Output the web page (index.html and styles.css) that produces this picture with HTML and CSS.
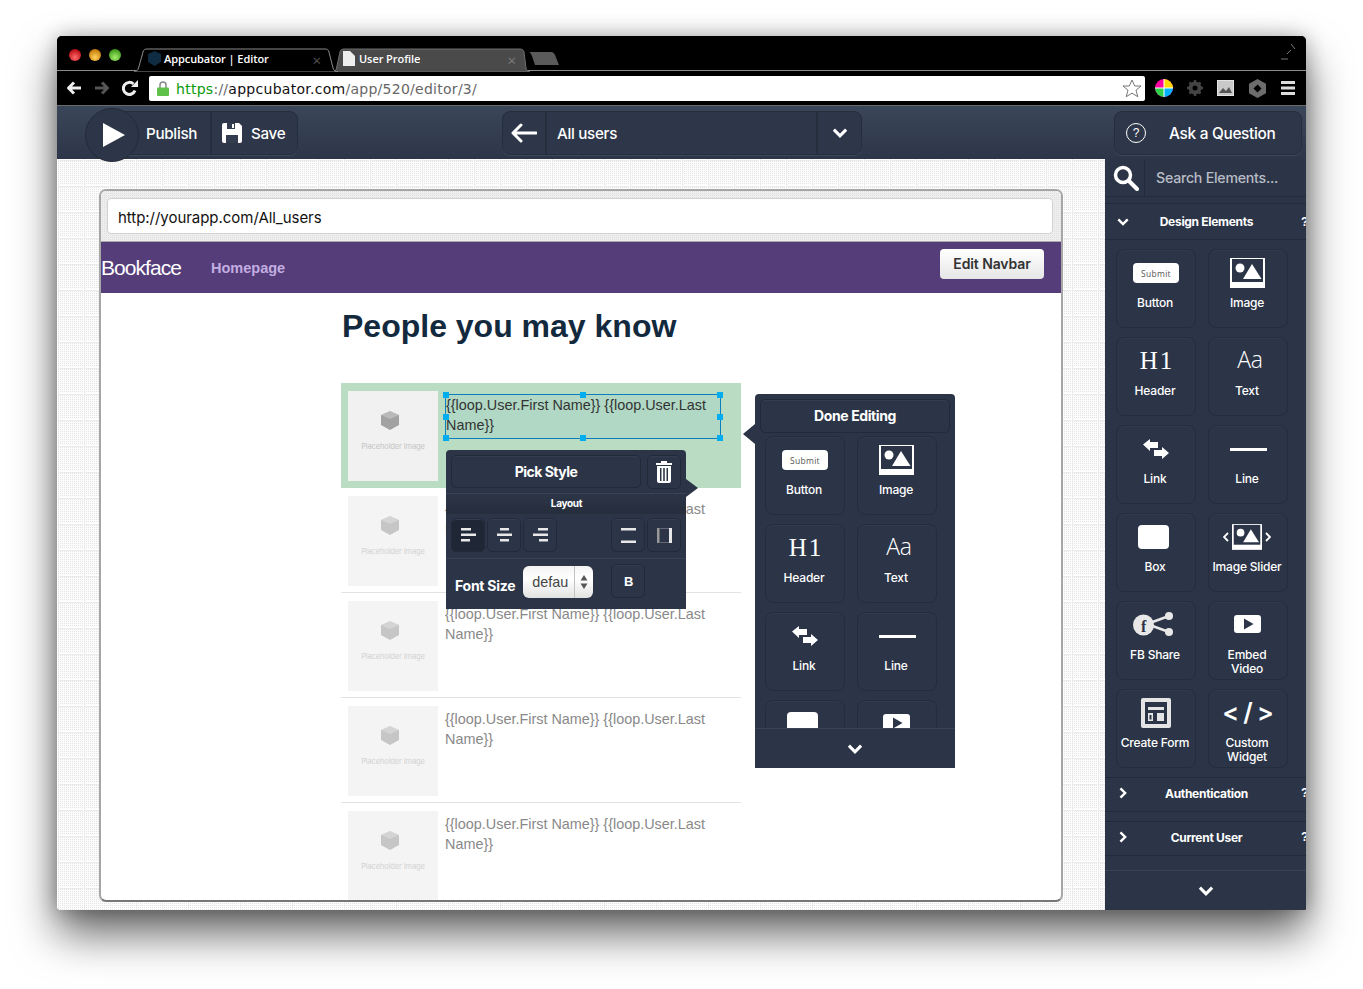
FILE: index.html
```html
<!DOCTYPE html>
<html lang="en">
<head>
<meta charset="utf-8">
<title>Appcubator | Editor</title>
<link rel="stylesheet" href="styles.css">
</head>
<body>
<svg class="defs" width="0" height="0" aria-hidden="true">
  <symbol id="i-image" viewBox="0 0 35 30"><path fill="#fff" d="M0 0h35v30H0z"/><path fill="#2c3547" d="M2 1h31v23H2z"/><circle cx="10" cy="10" r="4.5" fill="#fff"/><path fill="#fff" d="M13 21l9-15 9.500 15z"/></symbol>
  <symbol id="i-link" viewBox="0 0 26 20"><path fill="#fff" d="M0 5.500L7 0v3h8v6H7v3z"/><path fill="#fff" d="M26 14l-7-6v3h-8v6h8v3z"/></symbol>
  <symbol id="i-share" viewBox="0 0 40 26"><path stroke="#e8e8e8" stroke-width="2.500" fill="none" d="M14 13L36 5M14 13l22 8"/><circle cx="36" cy="5" r="4" fill="#e8e8e8"/><circle cx="36" cy="21" r="4" fill="#e8e8e8"/><circle cx="10.500" cy="14" r="10.500" fill="#e8e8e8"/><text x="10.500" y="21" text-anchor="middle" class="fb-f">f</text></symbol>
  <symbol id="i-video" viewBox="0 0 27 18"><rect width="27" height="18" rx="3" fill="#fff"/><path fill="#2c3547" d="M10 3.500L19.500 9 10 14.500z"/></symbol>
  <symbol id="i-form" viewBox="0 0 30 30"><rect width="30" height="30" rx="2" fill="#e4e4e4"/><path fill="#2c3547" d="M4 4h22v22H4z"/><path fill="#e4e4e4" d="M7 9h16v3H7zM7 15h5v8H7zM16 15h7v8h-7z"/><path fill="#2c3547" d="M8.500 17h2v4.500h-2z"/></symbol>
  <symbol id="i-cube" viewBox="0 0 18 19"><path fill="currentColor" d="M9 0l9 4v10l-9 5-9-5V4z"/><path fill="#fff" opacity=".25" d="M9 0l9 4-9 4-9-4z"/></symbol>
</svg>

<div class="window">
  <div class="tabstrip">
    <div class="lights"><i class="light red"></i><i class="light amber"></i><i class="light green"></i></div>
    <div class="tab tab-active">
      <svg class="tab-shape" width="204" height="24" viewBox="0 0 204 24"><path d="M-1 23H1c2 0 3-1 3.500-3L9 4c.5-2 1.500-3 4-3h178c2.500 0 3.500 1 4 3l4 16c.5 2 2 4 5 4H-1z" fill="#000" stroke="#8b8b8b"/></svg>
      <svg class="favicon" width="15" height="15" viewBox="0 0 15 15"><path fill="#0f2c42" d="M7.500 0L14 3v8l-6.500 4L1 11V3z"/></svg>
      <span class="tab-title">Appcubator | Editor</span>
      <span class="tab-x">×</span>
    </div>
    <div class="tab tab-back">
      <svg class="tab-shape" width="202" height="24" viewBox="0 0 202 24"><path d="M2 24c3 0 4-2 4.500-4L10 4c.5-2 1.500-3 4-3h176c2.500 0 3.500 1 4 3l2 16c.5 2 2 4 4 4z" fill="#4a4a4a" stroke="#6f6f6f"/></svg>
      <svg class="favicon" width="12" height="15" viewBox="0 0 12 15"><path fill="#eee" d="M0 0h7l5 5v10H0z"/></svg>
      <span class="tab-title">User Profile</span>
      <span class="tab-x">×</span>
    </div>
    <svg class="newtab" width="32" height="15" viewBox="0 0 32 15"><path fill="#5a5a5a" d="M0 1h22c2 0 3 1 4 3l4 10H6L3 5C2 3 1 1 0 1z"/></svg>
    <svg class="fullscreen" width="16" height="18" viewBox="0 0 16 18"><path d="M0 16h7M6 11l4-4M10 1l4 5" stroke="#777" fill="none"/></svg>
  </div>

  <div class="omnibar">
    <svg class="nav-ico" width="16" height="14" viewBox="0 0 16 14"><path fill="none" stroke="#eee" stroke-width="3" stroke-linejoin="round" d="M15 7H3M8 1.500L2.500 7 8 12.500"/></svg>
    <svg class="nav-ico" width="16" height="14" viewBox="0 0 16 14"><path fill="none" stroke="#555" stroke-width="3" stroke-linejoin="round" d="M1 7h12M8 1.500L13.500 7 8 12.500"/></svg>
    <svg class="nav-ico" width="16" height="16" viewBox="0 0 16 16"><path fill="none" stroke="#eee" stroke-width="3" d="M13 10.500A6 6 0 1 1 11.500 4"/><path fill="#eee" d="M9 7h7V0z"/></svg>
    <div class="urlbar">
      <svg class="lock" width="12" height="15" viewBox="0 0 12 15"><path fill="none" stroke="#888" stroke-width="1.500" d="M3 7V4a3 3 0 0 1 6 0v3"/><rect y="6.500" width="12" height="8.500" rx="1" fill="#5fc04a"/></svg>
      <span class="url"><span class="u-https">https</span><span class="u-dim">://</span>appcubator.com<span class="u-dim">/app/520/editor/3/</span></span>
      <svg class="star" width="20" height="19" viewBox="0 0 20 19"><path fill="#fff" stroke="#777" d="M10 1l2.700 6h6.300l-5 4.200 1.800 6.500L10 14.200 4.200 17.700 6 11.200 1 7h6.300z"/></svg>
    </div>
    <div class="exts">
      <svg width="18" height="18" viewBox="0 0 18 18"><circle cx="9" cy="9" r="9" fill="#ff00a0"/><path fill="#ffd800" d="M9 9V0a9 9 0 0 1 9 9z"/><path fill="#00b0ff" d="M9 9h9a9 9 0 0 1-9 9z"/><path fill="#2fd04a" d="M9 9v9a9 9 0 0 1-9-9z"/><path stroke="#fff" d="M9 0v18M0 9h18"/></svg>
      <svg width="16" height="16" viewBox="0 0 16 16"><circle cx="8" cy="8" r="4.500" fill="none" stroke="#444" stroke-width="4"/><path stroke="#444" stroke-width="2.500" d="M8 0v16M0 8h16M2.500 2.500l11 11M13.500 2.500l-11 11"/><circle cx="8" cy="8" r="2.500" fill="#000"/></svg>
      <svg width="17" height="16" viewBox="0 0 17 16"><rect width="17" height="16" fill="#c9c9c9"/><path fill="#555" d="M2 13l4-5 3 3 3-4 3 6z"/><path fill="none" stroke="#fff" stroke-dasharray="1 1" d="M.5.500h16v15H.5z"/></svg>
      <svg width="17" height="19" viewBox="0 0 17 19"><path fill="#6d6d6d" d="M8.500 0L17 4.800v9.400L8.500 19 0 14.200V4.800z"/><path fill="#000" d="M8.500 5.500l4 4-4 4-4-4z"/></svg>
      <svg width="14" height="14" viewBox="0 0 14 14"><path fill="#ddd" d="M0 0h14v3H0zM0 5.500h14v3H0zM0 11h14v3H0z"/></svg>
    </div>
  </div>

  <div class="appbar">
    <div class="play-circle"><svg width="22" height="24" viewBox="0 0 22 24"><path fill="#fff" d="M0 0l22 12L0 24z"/></svg></div>
    <div class="bar-group publish-group">
      <span class="bar-cell publish-cell">Publish</span>
      <span class="bar-cell save-cell">
        <svg width="20" height="20" viewBox="0 0 20 20"><path fill="#fff" d="M2 0h15l3 3v15a2 2 0 0 1-2 2H2a2 2 0 0 1-2-2V2a2 2 0 0 1 2-2z"/><path fill="#333d4f" d="M5 0h8v6H5zM4 12h12v8H4z"/><path fill="#fff" d="M10 1h2v4h-2z"/></svg>
        Save
      </span>
    </div>
    <div class="bar-group page-group">
      <span class="bar-cell back-cell"><svg width="26" height="20" viewBox="0 0 26 20"><path fill="none" stroke="#fff" stroke-width="3" stroke-linecap="round" stroke-linejoin="round" d="M25 10H3M10 2l-8 8 8 8"/></svg></span>
      <span class="bar-cell page-cell">All users</span>
      <span class="bar-cell down-cell"><svg class="chev" width="16" height="10" viewBox="0 0 14 9"><path d="M1.500 1.500L7 7l5.500-5.500"/></svg></span>
    </div>
    <div class="bar-group help-group">
      <span class="help-ico">?</span>
      <span class="help-text">Ask a Question</span>
    </div>
  </div>

  <div class="workspace">
    <div class="canvas">
      <div class="frame">
        <div class="frame-top"><div class="address">http://yourapp.com/All_users</div></div>
        <div class="navbar">
          <span class="brand">Bookface</span>
          <span class="nav-link">Homepage</span>
          <span class="edit-navbar">Edit Navbar</span>
        </div>
        <div class="page">
          <h1 class="title">People you may know</h1>
          <div class="list">
            <div class="row row-selected">
              <div class="ph ph-strong"><svg class="cube" width="18" height="19"><use href="#i-cube"/></svg><span>Placeholder Image</span></div>
              <div class="name name-selected">{{loop.User.First Name}} {{loop.User.Last Name}}
                <i class="h h-tl"></i><i class="h h-tc"></i><i class="h h-tr"></i><i class="h h-ml"></i><i class="h h-mr"></i><i class="h h-bl"></i><i class="h h-bc"></i><i class="h h-br"></i>
              </div>
            </div>
            <div class="row">
              <div class="ph"><svg class="cube" width="18" height="19"><use href="#i-cube"/></svg><span>Placeholder Image</span></div>
              <div class="name">{{loop.User.First Name}} {{loop.User.Last Name}}</div>
            </div>
            <div class="row">
              <div class="ph"><svg class="cube" width="18" height="19"><use href="#i-cube"/></svg><span>Placeholder Image</span></div>
              <div class="name">{{loop.User.First Name}} {{loop.User.Last Name}}</div>
            </div>
            <div class="row">
              <div class="ph"><svg class="cube" width="18" height="19"><use href="#i-cube"/></svg><span>Placeholder Image</span></div>
              <div class="name">{{loop.User.First Name}} {{loop.User.Last Name}}</div>
            </div>
            <div class="row">
              <div class="ph"><svg class="cube" width="18" height="19"><use href="#i-cube"/></svg><span>Placeholder Image</span></div>
              <div class="name">{{loop.User.First Name}} {{loop.User.Last Name}}</div>
            </div>
          </div>
        </div>
      </div>

      <div class="style-pop">
        <div class="pop-head">
          <span class="btn pick-style">Pick Style</span>
          <span class="btn icon-btn"><svg width="16" height="22" viewBox="0 0 16 22"><path fill="#fff" d="M5 0h6v2h5v2H0V2h5zM1 5h14v15a2 2 0 0 1-2 2H3a2 2 0 0 1-2-2zm3 2v13h1.500V7zm3.200 0v13h1.600V7zm3.300 0v13H12V7z" fill-rule="evenodd"/></svg></span>
        </div>
        <div class="layout-band">Layout</div>
        <div class="layout-row">
          <span class="btn icon-btn active"><svg width="15" height="14" viewBox="0 0 15 14"><path fill="#e8e8e8" d="M0 0h10v2.500H0zM0 5.500h15V8H0zM0 11h9v2.500H0z"/></svg></span>
          <span class="btn icon-btn"><svg width="15" height="14" viewBox="0 0 15 14"><path fill="#e8e8e8" d="M3 0h9v2.500H3zM0 5.500h15V8H0zM3 11h9v2.500H3z"/></svg></span>
          <span class="btn icon-btn"><svg width="15" height="14" viewBox="0 0 15 14"><path fill="#e8e8e8" d="M5 0h10v2.500H5zM0 5.500h15V8H0zM6 11h9v2.500H6z"/></svg></span>
          <span class="spacer"></span>
          <span class="btn icon-btn"><svg width="15" height="15" viewBox="0 0 15 15"><path fill="#e8e8e8" d="M0 0h15v2.500H0zM0 12.500h15V15H0z"/></svg></span>
          <span class="btn icon-btn"><svg width="15" height="15" viewBox="0 0 15 15"><path fill="#999" d="M0 0h2.500v15H0z"/><path fill="#e8e8e8" d="M12 0h3v15h-3z"/><path fill="#667" d="M2 0h10v1H2zM2 14h10v1H2z"/></svg></span>
        </div>
        <div class="font-row">
          <span class="font-label">Font Size</span>
          <span class="select"><span class="select-val">defau</span><span class="select-arrows"><svg width="8" height="14" viewBox="0 0 8 14"><path fill="#555" d="M4 0l3.500 5.500h-7zM4 14L.5 8.500h7z"/></svg></span></span>
          <span class="btn icon-btn bold-btn">B</span>
        </div>
      </div>

      <div class="done-pop">
        <div class="done-btn">Done Editing</div>
        <div class="done-scroll">
          <div class="tiles">
            <div class="tile"><div class="tile-ico"><span class="submit">Submit</span></div><div class="tile-label">Button</div></div>
            <div class="tile"><div class="tile-ico"><svg class="img-ico" width="35" height="30"><use href="#i-image"/></svg></div><div class="tile-label">Image</div></div>
            <div class="tile"><div class="tile-ico"><span class="h1-ico">H1</span></div><div class="tile-label">Header</div></div>
            <div class="tile"><div class="tile-ico"><span class="aa-ico">Aa</span></div><div class="tile-label">Text</div></div>
            <div class="tile"><div class="tile-ico"><svg width="26" height="20"><use href="#i-link"/></svg></div><div class="tile-label">Link</div></div>
            <div class="tile"><div class="tile-ico"><span class="line-ico"></span></div><div class="tile-label">Line</div></div>
            <div class="tile"><div class="tile-ico"><span class="box-ico"></span></div><div class="tile-label">Box</div></div>
            <div class="tile"><div class="tile-ico"><svg class="video-ico" width="27" height="18"><use href="#i-video"/></svg></div><div class="tile-label">Embed Video</div></div>
          </div>
        </div>
        <div class="more-bar"><svg class="chev" width="16" height="10" viewBox="0 0 14 9"><path d="M1.500 1.500L7 7l5.500-5.500"/></svg></div>
      </div>
    </div>

    <aside class="sidebar">
      <div class="search">
        <span class="search-ico"><svg width="26" height="26" viewBox="0 0 26 26"><circle cx="10" cy="10" r="7.500" fill="none" stroke="#fff" stroke-width="3.500"/><path stroke="#fff" stroke-width="4" stroke-linecap="round" d="M16 16l8 8"/></svg></span>
        <span class="search-text">Search Elements...</span>
      </div>
      <div class="sec-head first">
        <svg class="chev small" width="12" height="8" viewBox="0 0 14 9"><path d="M1.500 1.500L7 7l5.500-5.500"/></svg>
        <span class="sec-title">Design Elements</span>
        <span class="sec-q">?</span>
      </div>
      <div class="tiles side-tiles">
        <div class="tile"><div class="tile-ico"><span class="submit">Submit</span></div><div class="tile-label">Button</div></div>
        <div class="tile"><div class="tile-ico"><svg class="img-ico" width="35" height="30"><use href="#i-image"/></svg></div><div class="tile-label">Image</div></div>
        <div class="tile"><div class="tile-ico"><span class="h1-ico">H1</span></div><div class="tile-label">Header</div></div>
        <div class="tile"><div class="tile-ico"><span class="aa-ico">Aa</span></div><div class="tile-label">Text</div></div>
        <div class="tile"><div class="tile-ico"><svg width="26" height="20"><use href="#i-link"/></svg></div><div class="tile-label">Link</div></div>
        <div class="tile"><div class="tile-ico"><span class="line-ico"></span></div><div class="tile-label">Line</div></div>
        <div class="tile"><div class="tile-ico"><span class="box-ico"></span></div><div class="tile-label">Box</div></div>
        <div class="tile"><div class="tile-ico slider-ico"><svg width="6" height="10" viewBox="0 0 6 10"><path fill="none" stroke="#fff" stroke-width="1.800" d="M5 1L1 5l4 4"/></svg><svg width="30" height="26"><use href="#i-image"/></svg><svg width="6" height="10" viewBox="0 0 6 10"><path fill="none" stroke="#fff" stroke-width="1.800" d="M1 1l4 4-4 4"/></svg></div><div class="tile-label">Image Slider</div></div>
        <div class="tile"><div class="tile-ico"><svg class="share-ico" width="40" height="26"><use href="#i-share"/></svg></div><div class="tile-label">FB Share</div></div>
        <div class="tile"><div class="tile-ico"><svg class="video-ico" width="27" height="18"><use href="#i-video"/></svg></div><div class="tile-label">Embed<br>Video</div></div>
        <div class="tile"><div class="tile-ico"><svg width="30" height="30"><use href="#i-form"/></svg></div><div class="tile-label">Create Form</div></div>
        <div class="tile"><div class="tile-ico"><span class="code-ico">&lt; / &gt;</span></div><div class="tile-label">Custom<br>Widget</div></div>
      </div>
      <div class="sec-head">
        <svg class="chev small right" width="8" height="12" viewBox="0 0 9 14"><path d="M1.500 1.500L7 7l-5.500 5.500"/></svg>
        <span class="sec-title">Authentication</span>
        <span class="sec-q">?</span>
      </div>
      <div class="sec-head">
        <svg class="chev small right" width="8" height="12" viewBox="0 0 9 14"><path d="M1.500 1.500L7 7l-5.500 5.500"/></svg>
        <span class="sec-title">Current User</span>
        <span class="sec-q">?</span>
      </div>
      <div class="side-more"><svg class="chev" width="16" height="10" viewBox="0 0 14 9"><path d="M1.500 1.500L7 7l5.500-5.500"/></svg></div>
    </aside>
  </div>
</div>
</body>
</html>
```
FILE: styles.css
```css
* { box-sizing: border-box; }
html, body { margin: 0; height: 989px; overflow: hidden; background: #fff; }
body { padding: 36px 0 0 57px; font-family: "Inter", "Liberation Sans", sans-serif; }
.defs { position: absolute; }

.window {
  width: 1249px; height: 874px; display: flex; flex-direction: column;
  border-radius: 5px 5px 2px 2px; background: #000;
  box-shadow: 0 24px 44px rgba(0,0,0,.6), 0 0 20px rgba(0,0,0,.28);
}

/* browser chrome */
.tabstrip { height: 35px; flex: none; display: flex; align-items: flex-end; background: #000; border-bottom: 1px solid #8b8b8b; border-radius: 5px 5px 0 0; padding-left: 12px; }
.lights { display: flex; gap: 8px; width: 65px; height: 12px; margin-bottom: 9px; flex: none; }
.light { width: 12px; height: 12px; border-radius: 50%; }
.red { background: radial-gradient(circle at 50% 70%, #ff6a6a, #b90d14 75%); }
.amber { background: radial-gradient(circle at 50% 70%, #ffd35a, #c4790b 75%); }
.green { background: radial-gradient(circle at 50% 70%, #a4ee6a, #3f9a1c 75%); }
.tab { position: relative; width: 198px; height: 23px; display: flex; align-items: center; margin-bottom: -1px; padding-bottom: 2px; color: #fff; font: 600 11px "Open Sans", sans-serif; letter-spacing: -.07px; }
.tab-shape { position: absolute; left: 0; top: 0; }
.tab-active { z-index: 1; }
.favicon, .tab-title { position: relative; }
.tab-active .favicon { margin-left: 13px; margin-right: 2px; }
.tab-back .favicon { margin-left: 13px; margin-right: 4px; }
.tab-x { position: absolute; right: 11px; top: 2px; color: #555; font-size: 15px; font-weight: 400; }
.tab-back .tab-x { color: #7c7c7c; }
.tab-back { width: 197px; margin-left: -2px; }
.newtab { margin: 0 0 4px 2px; }
.fullscreen { margin: 0 9px 9px auto; }

.omnibar { height: 35px; flex: none; display: flex; align-items: center; background: #000; border-bottom: 1px solid #6a6a6a; padding-left: 9px; }
.nav-ico { margin-right: 12px; flex: none; }
.urlbar { width: 996px; height: 25px; margin-left: -1px; margin-top: 1px; display: flex; align-items: center; background: #fff; border-radius: 2px; padding: 0 3px 0 8px; }
.lock { flex: none; }
.url { margin-left: 7px; font: 14px "DejaVu Sans", sans-serif; letter-spacing: .27px; color: #111; flex: 1; }
.u-https { color: #0a9a0a; }
.u-dim { color: #666; }
.exts { display: flex; align-items: center; }
.exts svg:nth-child(1) { margin-left: 10px; }
.exts svg:nth-child(2) { margin-left: 14px; }
.exts svg:nth-child(3) { margin-left: 14px; }
.exts svg:nth-child(4) { margin-left: 15px; }
.exts svg:nth-child(5) { margin-left: 15px; }

/* app bar */
.appbar { height: 53px; flex: none; display: flex; align-items: center; background: linear-gradient(#3a4659, #2d3648); color: #fff; font-size: 15.2px; font-weight: 500; letter-spacing: -.3px; }
.play-circle { position: relative; z-index: 3; width: 54px; height: 54px; margin: 5px 0 0 28px; border-radius: 50%; display: flex; align-items: center; justify-content: center; padding-left: 3px; background: #2d3648; border: 1px solid #232a39; flex: none; }
.bar-group { display: flex; height: 44px; border: 1px solid #262e3e; border-radius: 8px; background: #2e3749; box-shadow: 0 1px 0 #3d4759; }
.bar-cell { display: flex; align-items: center; height: 100%; padding-top: 1px; }
.publish-group { width: 187px; margin-left: -28px; }
.publish-cell { width: 100px; padding-left: 34px; border-right: 2px solid #262e3e; }
.save-cell { padding-left: 10px; gap: 9px; }
.page-group { width: 360px; margin-left: 204px; }
.back-cell { width: 44px; justify-content: center; border-right: 2px solid #262e3e; }
.page-cell { flex: 1; padding-left: 10px; }
.down-cell { width: 45px; justify-content: center; border-left: 2px solid #262e3e; }
.help-group { width: 188px; margin-left: auto; margin-right: 4px; align-items: center; padding-left: 11px; padding-top: 1px; }
.help-ico { width: 20px; height: 20px; border: 1.500px solid #fff; border-radius: 50%; display: flex; align-items: center; justify-content: center; font: 12px "Liberation Sans", sans-serif; }
.help-text { margin-left: 23px; font-size: 15.4px; }
.chev { fill: none; stroke: #fff; stroke-width: 2.800; }

/* workspace */
.workspace { height: 751px; flex: none; display: flex; }
.canvas {
  position: relative; width: 1048px; flex: none; padding: 30px 0 0 42px; border-radius: 0 0 0 2px;
  background-color: #fff;
  background-image:
    linear-gradient(90deg, #fff 1px, #ebebeb 1px, #ebebeb 2px, transparent 2px),
    linear-gradient(#fff 1px, #ebebeb 1px, #ebebeb 2px, transparent 2px),
    conic-gradient(#e4e4e4 25%, #fcfcfc 0);
  background-size: 26px 26px, 26px 26px, 2px 2px;
}
.frame { width: 964px; height: 713px; border: 2px solid #a6a6a6; border-bottom-color: #777; border-radius: 7px; overflow: hidden; display: flex; flex-direction: column; background: #fff; }
.frame-top { height: 51px; flex: none; padding: 7px 8px 0 6px; background-color: #ececec; background-image: conic-gradient(#e0e0e0 25%, #eeeeee 0); background-size: 2px 2px; border-bottom: 1px solid #aaa; }
.address { height: 36px; background: #fff; border: 1px solid #d2d2d2; border-radius: 4px; display: flex; align-items: center; padding: 3px 0 0 10px; font: 400 15px "Inter", sans-serif; letter-spacing: -.04px; color: #111; }
.navbar { height: 51px; flex: none; display: flex; align-items: center; background: #553d7a; padding-right: 17px; }
.brand { font: 21px "Liberation Sans", sans-serif; letter-spacing: -.95px; color: #fff; width: 110px; }
.nav-link { font: 700 14.500px "Liberation Sans", sans-serif; color: #c3aee0; }
.edit-navbar { align-self: flex-start; margin: 7px 0 0 auto; padding-bottom: 2px; width: 104px; height: 30px; display: flex; align-items: center; justify-content: center; border-radius: 4px; background: linear-gradient(#fff, #e6e6e6); color: #333; font: 600 14px "Inter", sans-serif; letter-spacing: -.1px; }
.page { flex: 1; padding-left: 240px; }
.title { margin: 0 0 24px; padding-left: 1px; height: 66px; font: 700 32px/66px "Liberation Sans", sans-serif; letter-spacing: 0; color: #13293d; }
.list { width: 400px; }
.row { height: 105px; padding: 8px 7px 0; display: flex; border-bottom: 1px solid #e2e2e2; }
.row-selected { background: #b9dcc3; border-bottom: none; }
.ph { width: 90px; height: 90px; flex: none; display: flex; flex-direction: column; align-items: center; background: #f4f4f4; color: #c6c6c6; padding-top: 20px; }
.cube { margin-right: 6px; }
.ph span { margin-top: 12px; font-size: 7.500px; font-family: "Inter", sans-serif; letter-spacing: -.13px; color: #d2d2d2; }
.ph-strong { background: #f1f1f1; color: #a2a2a2; }
.ph-strong span { color: #c4c4c4; }
.name { margin: 3px 0 0 7px; width: 276px; font: 14.400px/20px "Liberation Sans", sans-serif; color: #888; }
.name-selected { position: relative; height: 45px; border: 1px solid #0a7fbf; background: #b0d8c4; color: #333; }
.h { position: absolute; width: 6px; height: 6px; background: #00aeef; }
.h-tl { left: -3px; top: -3px; } .h-tc { left: calc(50% - 3px); top: -3px; } .h-tr { right: -3px; top: -3px; }
.h-ml { left: -3px; top: calc(50% - 3px); } .h-mr { right: -3px; top: calc(50% - 3px); }
.h-bl { left: -3px; bottom: -3px; } .h-bc { left: calc(50% - 3px); bottom: -3px; } .h-br { right: -3px; bottom: -3px; }

/* popovers */
.btn { display: flex; align-items: center; justify-content: center; border: 1px solid #222a3a; border-radius: 5px; box-shadow: inset 0 1px 0 #343d50; }
.style-pop { position: absolute; left: 389px; top: 291px; width: 240px; height: 159px; background: #2c3547; border-radius: 4px 4px 0 0; color: #fff; font-size: 14px; font-weight: 700; letter-spacing: -.5px; }
.style-pop::after { content: ""; position: absolute; right: -12px; top: 29px; border: solid transparent; border-width: 9px 0 9px 12px; border-left-color: #2c3547; }
.pop-head { height: 44px; display: flex; gap: 6px; padding: 5px 5px 0; border-bottom: 1px solid #3a4356; }
.pick-style { width: 190px; height: 33px; }
.icon-btn { width: 34px; height: 34px; flex: none; }
.layout-band { height: 20px; display: flex; align-items: center; justify-content: center; padding: 0 0 2px 1px; font-size: 10px; font-weight: 700; letter-spacing: -.3px; background: linear-gradient(#2c3547, #262d3c); }
.layout-row { height: 45px; display: flex; gap: 2px; padding: 4px 5px 0; border-bottom: 1px solid #3a4356; }
.active { background: #1f2636; }
.spacer { flex: 1; }
.font-row { position: relative; display: flex; align-items: flex-start; height: 50px; padding-left: 9px; }
.font-label { margin-top: 18px; font-size: 14px; font-weight: 700; letter-spacing: -.25px; }
.select { width: 70px; height: 32px; margin: 7px 0 0 8px; display: flex; border-radius: 6px; background: linear-gradient(#f4f4f4, #fff 40%, #e2e2e2); color: #444; font: 14.400px "Liberation Sans", sans-serif; letter-spacing: 0; }
.select-val { flex: 1; display: flex; align-items: center; padding-left: 9px; }
.select-arrows { width: 19px; display: flex; align-items: center; justify-content: center; border-left: 1px solid #c2c2c2; }
.bold-btn { margin: 5px 0 0 18px; font: 700 13px "Liberation Sans", sans-serif; }

.done-pop { position: absolute; left: 698px; top: 235px; width: 200px; height: 374px; display: flex; flex-direction: column; background: #2c3547; border-radius: 4px 4px 0 0; color: #fff; }
.done-pop::before { content: ""; position: absolute; left: -12px; top: 30px; border: solid transparent; border-width: 10px 12px 10px 0; border-right-color: #2c3547; }
.done-btn { flex: none; height: 34px; margin: 5px 5px 0; padding-bottom: 1px; border: 1px solid #222a3a; border-radius: 5px; display: flex; align-items: center; justify-content: center; box-shadow: inset 0 1px 0 #343d50; font-size: 14px; font-weight: 700; letter-spacing: -.4px; }
.done-scroll { flex: 1; min-height: 0; overflow: hidden; padding: 3px 0 0 10px; }
.more-bar { flex: none; height: 40px; display: flex; align-items: center; justify-content: center; border-top: 1px solid #3a4356; }

/* element tiles */
.tiles { display: grid; grid-template-columns: 80px 80px; grid-auto-rows: 79px; column-gap: 12px; row-gap: 9px; }
.tile { border: 1px solid #252c3b; border-radius: 8px; box-shadow: inset 0 1px 0 #323b4e; text-align: center; color: #fff; font-size: 12px; font-weight: 500; letter-spacing: -.2px; }
.tile-ico { height: 46px; display: flex; align-items: center; justify-content: center; }
.tile-label { line-height: 14px; padding-right: 2px; }
.submit { width: 46px; height: 20px; display: flex; align-items: center; justify-content: center; background: #fff; border-radius: 4px; color: #555; font: 8.500px "Open Sans", sans-serif; letter-spacing: .3px; }
.img-ico { margin-right: 2px; }
.video-ico { margin: 0 2px 2px 0; }
.share-ico { margin: 0 6px 2px 0; }
.h1-ico { font: 400 25px "Liberation Serif", serif; letter-spacing: 2px; margin: 0 0 1px 2px; }
.aa-ico { font: 300 23px "Open Sans", sans-serif; margin: 0 0 4px 4px; }
.line-ico { display: block; width: 37px; height: 3px; background: #fff; }
.box-ico { display: block; width: 31px; height: 24px; background: #fff; border-radius: 4px; margin-right: 6px; }
.slider-ico { gap: 3px; padding-right: 2px; }
.code-ico { font: 600 25px "Inter", sans-serif; white-space: pre; letter-spacing: -1px; margin: 0 1px 2px 0; }
.fb-f { font: 700 16px "Liberation Serif", serif; fill: #2c3547; }

/* sidebar */
.sidebar { width: 201px; flex: none; height: 751px; overflow: hidden; display: flex; flex-direction: column; background: #2c3547; color: #fff; border-radius: 0 0 2px 0; }
.search { height: 38px; flex: none; display: flex; align-items: center; border-bottom: 1px solid #232a39; }
.search-ico { width: 40px; height: 100%; display: flex; align-items: center; justify-content: center; border-right: 1px solid #232a39; padding: 1px 0 0 3px; }
.search-text { margin-left: 11px; color: #b8bcc4; font-size: 14.200px; font-weight: 500; letter-spacing: -.25px; }
.sec-head { flex: none; position: relative; height: 35px; margin-top: 9px; padding-bottom: 3px; display: flex; align-items: center; justify-content: center; border-top: 1px solid #232a39; border-bottom: 1px solid #232a39; font-size: 12px; font-weight: 700; letter-spacing: -.3px; }
.sec-head.first { height: 37px; margin-top: 6px; padding-bottom: 0; }
.sec-head .chev { position: absolute; left: 12px; }
.sec-head .chev.right { left: 14px; }
.sec-title { margin-left: 2px; }
.sec-q { position: absolute; left: 196px; font-family: "Liberation Sans", sans-serif; }
.side-tiles { flex: none; padding: 9px 0 0 11px; }
.side-more { margin-top: auto; flex: none; height: 40px; display: flex; align-items: center; justify-content: center; border-top: 1px solid #3a4356; }
```
